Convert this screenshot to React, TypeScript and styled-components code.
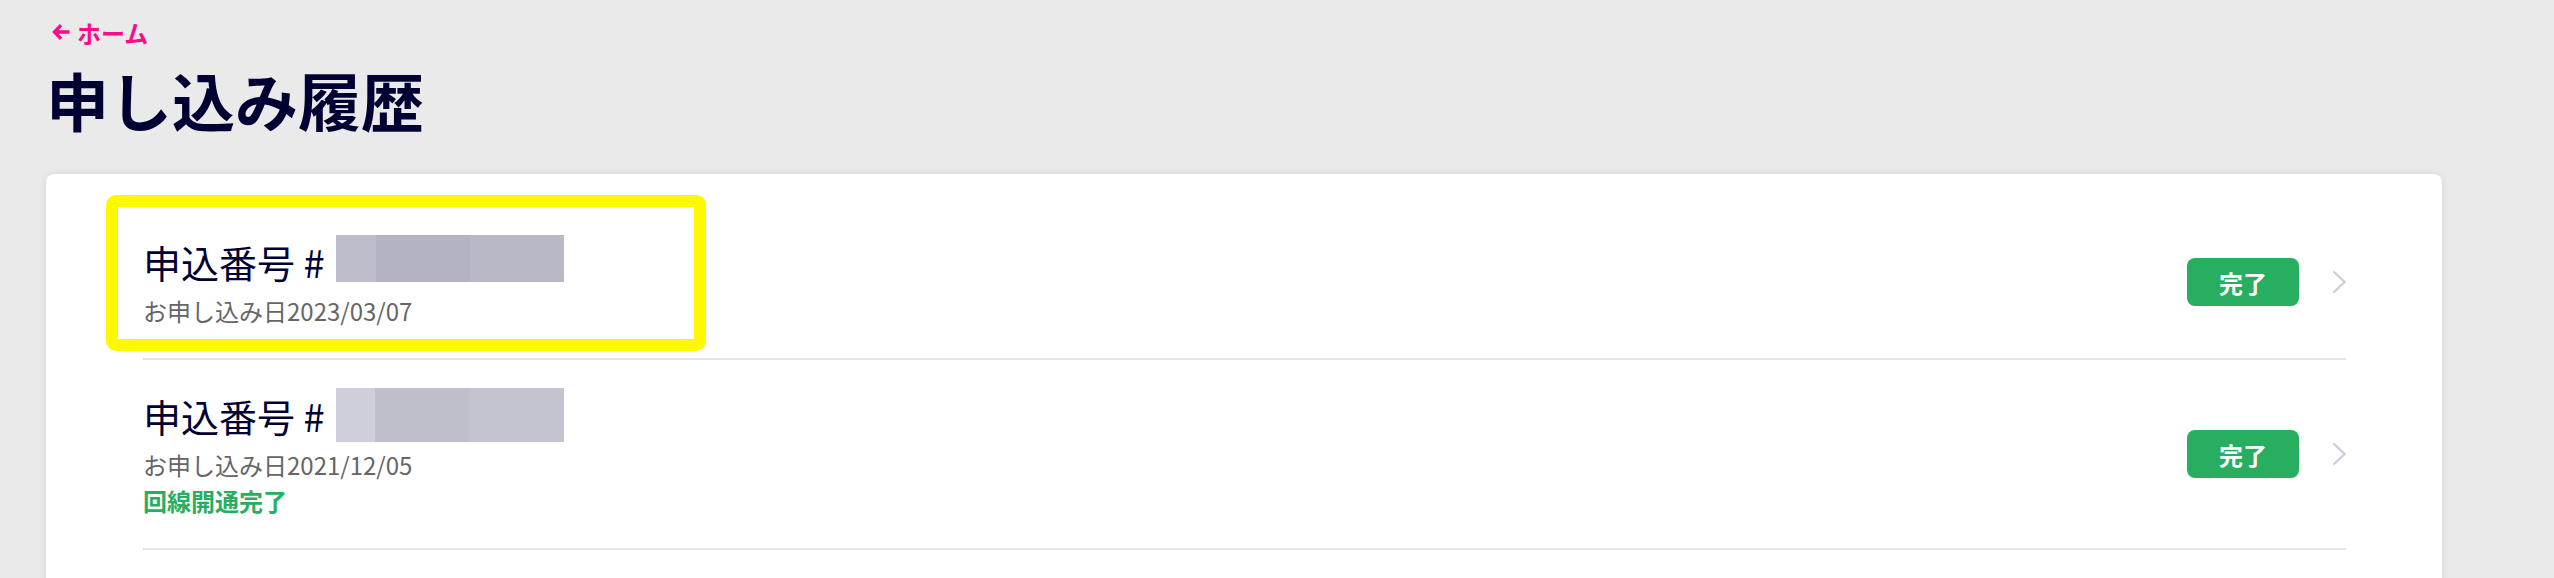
import React from "react";
import styled, { createGlobalStyle } from "styled-components";

const GlobalStyle = createGlobalStyle`
  html, body { margin: 0; padding: 0; background: #eaeaea; }
  body { font-family: "Noto Sans CJK JP", "Noto Sans", sans-serif; }
  * { box-sizing: border-box; }
`;

const Page = styled.main`
  padding: 14px 112px 0 46px;
  min-height: 578px;
`;

const BackLink = styled.a`
  display: inline-flex;
  align-items: center;
  gap: 7px;
  height: 36px;
  margin-left: 6px;
  font-size: 24px;
  font-weight: 700;
  color: #ff0a8a;
  text-decoration: none;
`;

const Heading = styled.h1`
  margin: 10px 0 0 0;
  font-size: 63px;
  line-height: 77px;
  font-weight: 700;
  color: #000033;
`;

const Card = styled.section`
  margin-top: 37px;
  background: #ffffff;
  border-radius: 8px;
  padding: 32px 96px 80px 97px;
  box-shadow: 0 0 6px rgba(70, 70, 150, 0.14);
`;

const Row = styled.div`
  position: relative;
  display: flex;
  align-items: center;
  padding: 25px 0 29px;
  border-bottom: 2px solid #e5e5e8;
`;

const Info = styled.div`
  flex: 1;
  display: flex;
  flex-direction: column;
`;

const OrderTitle = styled.div`
  display: flex;
  align-items: flex-start;
  font-size: 38px;
  line-height: 62px;
  color: #000033;
`;

const Redacted = styled.span<{ $top: number; $height: number }>`
  display: flex;
  margin-left: 11px;
  margin-top: ${(p) => p.$top}px;
  height: ${(p) => p.$height}px;
`;

const RedactSeg = styled.span<{ $w: number; $c: string }>`
  width: ${(p) => p.$w}px;
  height: 100%;
  background: ${(p) => p.$c};
`;

const DateText = styled.div`
  font-size: 24px;
  line-height: 36px;
  color: #666666;
`;

const StatusText = styled.div`
  font-size: 24px;
  line-height: 36px;
  font-weight: 700;
  color: #27ae60;
`;

const Badge = styled.span`
  display: flex;
  align-items: center;
  justify-content: center;
  width: 112px;
  height: 48px;
  margin-top: 4px;
  border-radius: 8px;
  background: #27ae60;
  color: #ffffff;
  font-size: 24px;
  font-weight: 700;
`;

const Chevron = styled.svg`
  margin-left: 33px;
  margin-top: 4px;
  flex: none;
`;

const Highlight = styled.div`
  position: absolute;
  left: -37px;
  top: -11px;
  width: 600px;
  height: 156px;
  border: 12px solid #fff800;
  border-radius: 10px;
  pointer-events: none;
`;

type Seg = { w: number; c: string };

type Order = {
  date: string;
  status?: string;
  highlight?: boolean;
  redactTop: number;
  redactHeight: number;
  segs: Seg[];
};

const orders: Order[] = [
  {
    date: "2023/03/07",
    highlight: true,
    redactTop: 4,
    redactHeight: 47,
    segs: [
      { w: 40, c: "#bdbdcc" },
      { w: 94, c: "#b3b3c4" },
      { w: 94, c: "#b8b8c7" },
    ],
  },
  {
    date: "2021/12/05",
    status: "回線開通完了",
    redactTop: 3,
    redactHeight: 54,
    segs: [
      { w: 39, c: "#cfcfdb" },
      { w: 94, c: "#bfbfcc" },
      { w: 95, c: "#c4c4d0" },
    ],
  },
];

export default function App() {
  return (
    <>
      <GlobalStyle />
      <Page>
        <BackLink href="#">
          <svg width="18" height="18" viewBox="0 0 18 18" fill="none">
            <path
              d="M9 2.2 L2.5 9 L9 15.8 M3 9 H17.5"
              stroke="#ff0a8a"
              strokeWidth="3.4"
              strokeLinecap="butt"
              strokeLinejoin="miter"
            />
          </svg>
          ホーム
        </BackLink>
        <Heading>申し込み履歴</Heading>
        <Card>
          {orders.map((o, i) => (
            <Row key={i}>
              {o.highlight && <Highlight />}
              <Info>
                <OrderTitle>
                  申込番号 #
                  <Redacted $top={o.redactTop} $height={o.redactHeight}>
                    {o.segs.map((s, j) => (
                      <RedactSeg key={j} $w={s.w} $c={s.c} />
                    ))}
                  </Redacted>
                </OrderTitle>
                <DateText>お申し込み日{o.date}</DateText>
                {o.status && <StatusText>{o.status}</StatusText>}
              </Info>
              <Badge>完了</Badge>
              <Chevron width="14" height="24" viewBox="0 0 14 24" fill="none">
                <path d="M1.5 1.5 L12.5 12 L1.5 22.5" stroke="#cfcce0" strokeWidth="2.4" />
              </Chevron>
            </Row>
          ))}
        </Card>
      </Page>
    </>
  );
}
